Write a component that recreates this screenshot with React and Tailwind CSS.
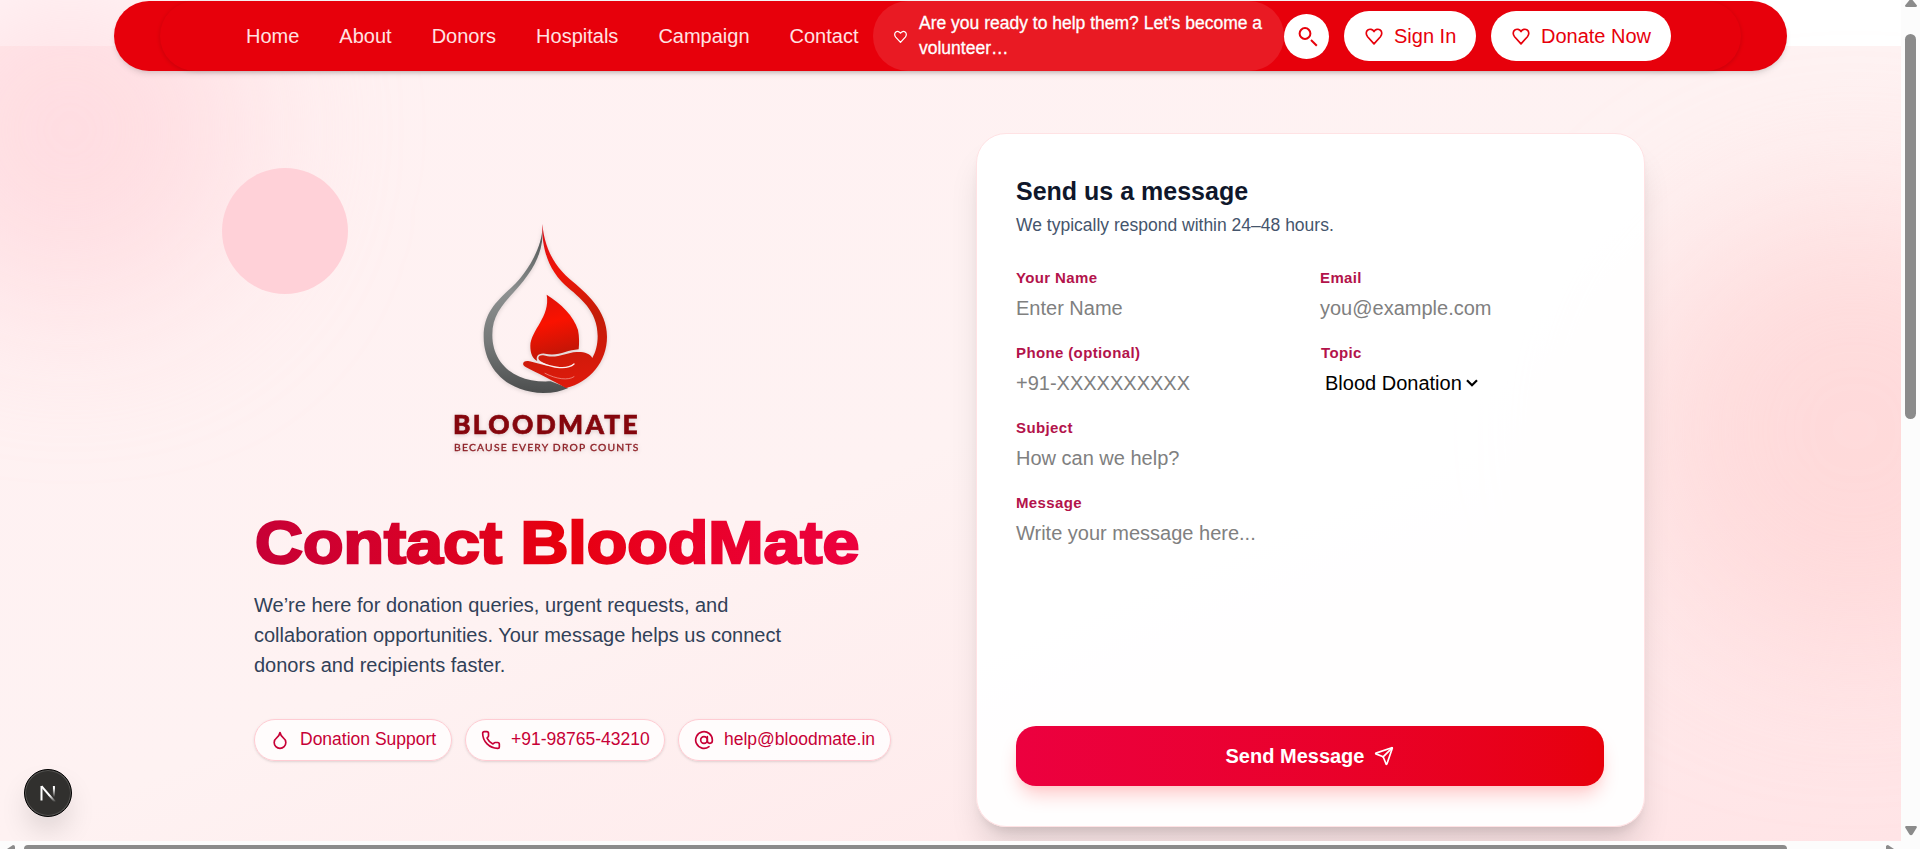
import { Phone, AtSign, Send, Droplet } from "lucide-react";

const NAV = ["Home", "About", "Donors", "Hospitals", "Campaign", "Contact"];

function Heart({ className }) {
  return (
    <svg viewBox="0 0 24 24" fill="none" stroke="currentColor" strokeWidth="2" strokeLinejoin="round" className={className}>
      <path d="M12 21.500L4.300 12.900C2 10.200 2.200 6.500 4.600 4.800C7 3.100 10.200 3.900 12 6.600C13.800 3.900 17 3.100 19.400 4.800C21.800 6.500 22 10.200 19.700 12.900Z" />
    </svg>
  );
}

function SearchIcon() {
  return (
    <svg viewBox="0 0 24 24" fill="none" stroke="currentColor" strokeWidth="2" className="size-[24px]">
      <circle cx="10" cy="9.500" r="5.400" />
      <path d="M16 16L21.800 21.700" />
    </svg>
  );
}

function Logo() {
  return (
    <svg viewBox="0 0 690 780" className="h-[260px] w-[230px] drop-shadow-sm">
      <defs>
        <linearGradient id="gray" gradientUnits="userSpaceOnUse" x1="330" y1="60" x2="330" y2="549">
          <stop offset="0" stopColor="#4a4f4f" />
          <stop offset="0.38" stopColor="#8d9090" />
          <stop offset="0.7" stopColor="#747777" />
          <stop offset="1" stopColor="#4c4e4e" />
        </linearGradient>
        <linearGradient id="red" gradientUnits="userSpaceOnUse" x1="340" y1="42" x2="440" y2="534">
          <stop offset="0" stopColor="#d8101a" />
          <stop offset="0.3" stopColor="#f01408" />
          <stop offset="0.6" stopColor="#c41d08" />
          <stop offset="0.8" stopColor="#d01a0a" />
          <stop offset="1" stopColor="#e01a0c" />
        </linearGradient>
        <linearGradient id="flame" x1="0.400" y1="0" x2="0.600" y2="1">
          <stop offset="0" stopColor="#e01208" />
          <stop offset="0.4" stopColor="#fa1200" />
          <stop offset="1" stopColor="#b81608" />
        </linearGradient>
      </defs>
      <path fill="url(#gray)" d="M337 60C332 120 290 190 245 232C195 278 161 312 161 380C161 480 240 549 340 549C370 549 395 543 415 534L362 514C255 520 187 462 187 375C187 320 212 290 252 246C305 188 342 130 337 60Z" />
      <path fill="url(#red)" d="M337 42C334 125 362 185 405 225C450 264 503 302 503 378C503 405 497 425 487 444C480 430 462 425 440 426C405 428 380 448 340 436C325 434 320 446 331 453C340 460 352 464 362 468C340 467 315 456 294 453C277 452 275 465 287 471C320 488 360 508 408 534C480 516 531 455 531 380C531 300 470 250 418 206C370 165 343 110 337 42Z" />
      <path fill="url(#flame)" d="M350 254C392 280 432 318 444 360C448 380 448 400 446 418C410 420 385 440 345 431C325 428 316 440 322 453C308 447 301 430 301 408C302 360 362 320 350 254Z" />
      <path fill="none" stroke="#fff0f0" strokeWidth="4" strokeLinecap="round" d="M330 457C370 474 412 480 432 462" />
      <path fill="none" stroke="#f3a9a4" strokeWidth="2" strokeLinecap="round" d="M345 490C380 508 415 512 432 500" />
      <text x="69" y="673" textLength="554" lengthAdjust="spacing" fill="#85060d" stroke="#85060d" strokeWidth="2" fontFamily="Lato, sans-serif" fontWeight="900" fontSize="79">BLOODMATE</text>
      <text x="72" y="722" textLength="553" lengthAdjust="spacing" fill="#8f2026" stroke="#8f2026" strokeWidth="1" fontFamily="Lato, sans-serif" fontWeight="400" fontSize="31">BECAUSE EVERY DROP COUNTS</text>
    </svg>
  );
}

function Field({ label, placeholder, className = "" }) {
  return (
    <label className={"flex flex-col gap-[5px] " + className}>
      <span className="text-[15px] leading-[20px] font-bold tracking-[0.375px] text-[#b3134b]">{label}</span>
      <span className="text-[20px] leading-[30px] text-[#808080]">{placeholder}</span>
    </label>
  );
}

function Chip({ icon, children, className }) {
  return (
    <span className={"flex h-[42px] shrink-0 items-center gap-[10px] rounded-full border border-[#ffccd3] bg-white/80 pl-[15px] text-[17.5px] leading-[25px] whitespace-nowrap text-[#c70036] shadow-sm " + className}>
      {icon}
      <span className="-mt-[2px]">{children}</span>
    </span>
  );
}

export default function App() {
  return (
    <div className="relative flex h-[849px] w-[1920px] flex-col overflow-hidden bg-white font-['Liberation_Sans',Arial,sans-serif]">
      <div className="flex h-[841px]">
        <div className="relative h-[841px] w-[1901px] overflow-hidden pt-[46px]">
          <section className="h-[795px] bg-linear-to-br from-[#fff1f2] via-[#fef2f2] to-[#ffe4e6]" />

          {/* soft ambient shapes */}
          <div className="absolute -top-[50px] -left-[110px] size-[360px] rounded-full bg-[#ffccd3]/55 blur-[80px]" />
          <div className="absolute top-[205px] left-[1630px] size-[450px] rounded-full bg-[#ffc9c9]/50 blur-[80px]" />
          <div className="absolute top-[168px] left-[222px] size-[126px] rounded-full bg-[#ffd1d8]" />

          <header className="absolute top-px left-[114px] flex h-[70px] w-[1673px] justify-center rounded-full bg-[#e7000b] shadow-md">
            <nav className="flex h-[70px] w-[1581px] items-center rounded-full pl-[86px] shadow-[0_1px_4px_rgba(0,0,0,0.14)]">
              <ul className="flex w-[627px] shrink-0 gap-[40px] text-[20px] leading-[30px] text-[#ffe2e2]">
                {NAV.map((n) => (
                  <li key={n}>{n}</li>
                ))}
              </ul>
              <div className="flex h-[70px] w-[411px] shrink-0 items-center gap-[11px] rounded-full bg-white/10 pl-[20px] text-white">
                <Heart className="size-[15px] shrink-0" />
                <p className="w-[350px] text-[17.5px] leading-[25px] font-normal [-webkit-text-stroke:0.3px_white]">
                  Are you ready to help them? Let’s become a<br />volunteer…
                </p>
              </div>
              <div className="flex items-center text-[20px] leading-[30px] text-[#e7000b]">
                <button className="flex size-[45px] items-center justify-center rounded-full bg-white">
                  <SearchIcon />
                </button>
                <button className="ml-[15px] flex h-[50px] w-[132px] items-center gap-[10px] rounded-full bg-white pl-[20px]">
                  <Heart className="size-[20px]" />
                  Sign In
                </button>
                <button className="ml-[15px] flex h-[50px] w-[180px] items-center gap-[10px] rounded-full bg-white pl-[20px]">
                  <Heart className="size-[20px]" />
                  Donate Now
                </button>
              </div>
            </nav>
          </header>

          <main className="absolute inset-x-0 top-[133px] flex justify-between pr-[256px] pl-[254px]">
            <div className="flex w-[638px] flex-col pt-[77px]">
              <div className="pl-[176px]">
                <Logo />
              </div>
              <h1 className="mt-[36px] w-[548px] origin-left scale-x-[1.124] bg-linear-to-r from-[#c70036] via-[#e7000b] to-[#ec003f] bg-clip-text pl-px text-[59px] leading-[75px] font-bold whitespace-nowrap text-transparent [-webkit-text-stroke:2.4px_transparent]">
                Contact BloodMate
              </h1>
              <p className="mt-[9px] w-[560px] text-[20px] leading-[30px] text-[#314158]">
                We’re here for donation queries, urgent requests, and collaboration opportunities. Your message helps us connect donors and recipients faster.
              </p>
              <div className="mt-[39px] flex">
                <Chip className="w-[198px]" icon={<Droplet className="size-[20px]" strokeWidth={2} />}>Donation Support</Chip>
                <Chip className="ml-[13px] w-[200px]" icon={<Phone className="size-[20px]" strokeWidth={2} />}>+91-98765-43210</Chip>
                <Chip className="ml-[13px] w-[213px]" icon={<AtSign className="size-[20px]" strokeWidth={2} />}>help@bloodmate.in</Chip>
              </div>
            </div>

            <form className="flex h-[694px] w-[669px] flex-col rounded-[30px] border border-[#ffe2e4] bg-white/95 px-[39px] pt-[40px] shadow-[0_25px_32px_-6px_rgba(0,0,0,0.13),0_8px_12px_-6px_rgba(0,0,0,0.12)]">
              <h2 className="text-[25px] leading-[35px] font-bold text-[#0f172b]">Send us a message</h2>
              <p className="mt-[4px] text-[17.5px] leading-[25px] text-[#45556c]">We typically respond within 24–48 hours.</p>
              <div className="mt-[30px] grid grid-cols-[304px_284px] gap-y-[20px]">
                <Field label="Your Name" placeholder="Enter Name" />
                <Field label="Email" placeholder="you@example.com" />
                <Field label="Phone (optional)" placeholder="+91-XXXXXXXXXX" />
                <div className="flex flex-col gap-[5px] pl-px">
                  <span className="text-[15px] leading-[20px] font-bold tracking-[0.375px] text-[#b3134b]">Topic</span>
                  <span className="flex items-center gap-[4px] pl-[4px] text-[20px] leading-[30px] text-black">
                    Blood Donation
                    <svg viewBox="0 0 12 8" className="h-[8px] w-[12px]" fill="none" stroke="black" strokeWidth="2.200">
                      <path d="M1 1.200L6 6.200L11 1.200" />
                    </svg>
                  </span>
                </div>
                <Field className="col-span-2" label="Subject" placeholder="How can we help?" />
                <Field className="col-span-2" label="Message" placeholder="Write your message here..." />
              </div>
              <button className="mt-[178px] flex h-[60px] w-[588px] items-center justify-center gap-[10px] rounded-[20px] bg-linear-to-r from-[#ec003f] to-[#e7000b] text-[20px] leading-[30px] font-bold text-white shadow-[0_12px_19px_-4px_#ffc9c9,0_5px_8px_-5px_#ffc9c9]">
                Send Message
                <Send className="size-[20px]" strokeWidth={2} />
              </button>
            </form>
          </main>

          <div className="absolute top-[769px] left-[23.5px] flex size-[48px] items-center justify-center rounded-full border border-black bg-[#31302e] shadow-[inset_0_0_0_1px_#565553,0_16px_32px_-8px_rgba(0,0,0,0.24)]">
            <svg viewBox="0 0 18 18" className="size-[18px]" fill="none" strokeWidth="2">
              <defs>
                <linearGradient id="nfade" gradientUnits="userSpaceOnUse" x1="0" y1="2" x2="0" y2="18">
                  <stop offset="0.6" stopColor="white" />
                  <stop offset="1" stopColor="white" stopOpacity="0" />
                </linearGradient>
                <linearGradient id="nbar" gradientUnits="userSpaceOnUse" x1="0" y1="2" x2="0" y2="13">
                  <stop offset="0.2" stopColor="white" />
                  <stop offset="1" stopColor="white" stopOpacity="0" />
                </linearGradient>
              </defs>
              <path stroke="white" d="M2.500 16.500V2" />
              <path stroke="url(#nfade)" d="M2.500 2.200L16 18" />
              <path stroke="url(#nbar)" d="M14.900 2L15 13" />
            </svg>
          </div>
        </div>

        <div className="flex w-[19px] flex-col items-center bg-[#fcfcfc]">
          <svg viewBox="0 0 12 7" className="h-[7px] w-[12px]">
            <path d="M4.500 0H7.500L12 5.500Q12 7 10.500 7H1.500Q0 7 0 5.500Z" fill="#8b8b8b" />
          </svg>
          <div className="mt-[27px] h-[385px] w-[11px] rounded-full bg-[#8b8b8b]" />
          <svg viewBox="0 0 12 10" className="mt-[407px] h-[10px] w-[12px]">
            <path d="M1 0H11Q12.500 0.500 11.500 2L7.500 8.500Q6 10 4.500 8.500L0.500 2Q-0.500 0.500 1 0Z" fill="#8b8b8b" />
          </svg>
        </div>
      </div>
      <div className="flex h-[8px] items-end bg-[#fcfcfc] pl-[7px]">
        <svg viewBox="0 0 8 4" className="h-[4px] w-[8px]">
          <path d="M0 4L6 0Q8 0 8 2V4Z" fill="#8b8b8b" />
        </svg>
        <div className="ml-[9px] h-[4px] w-[1763px] rounded-t-[4px] bg-[#8b8b8b]" />
        <svg viewBox="0 0 8 4" className="ml-[99px] h-[4px] w-[8px]">
          <path d="M0 4V1Q1 0 2 0L8 4Z" fill="#8b8b8b" />
        </svg>
      </div>
    </div>
  );
}
